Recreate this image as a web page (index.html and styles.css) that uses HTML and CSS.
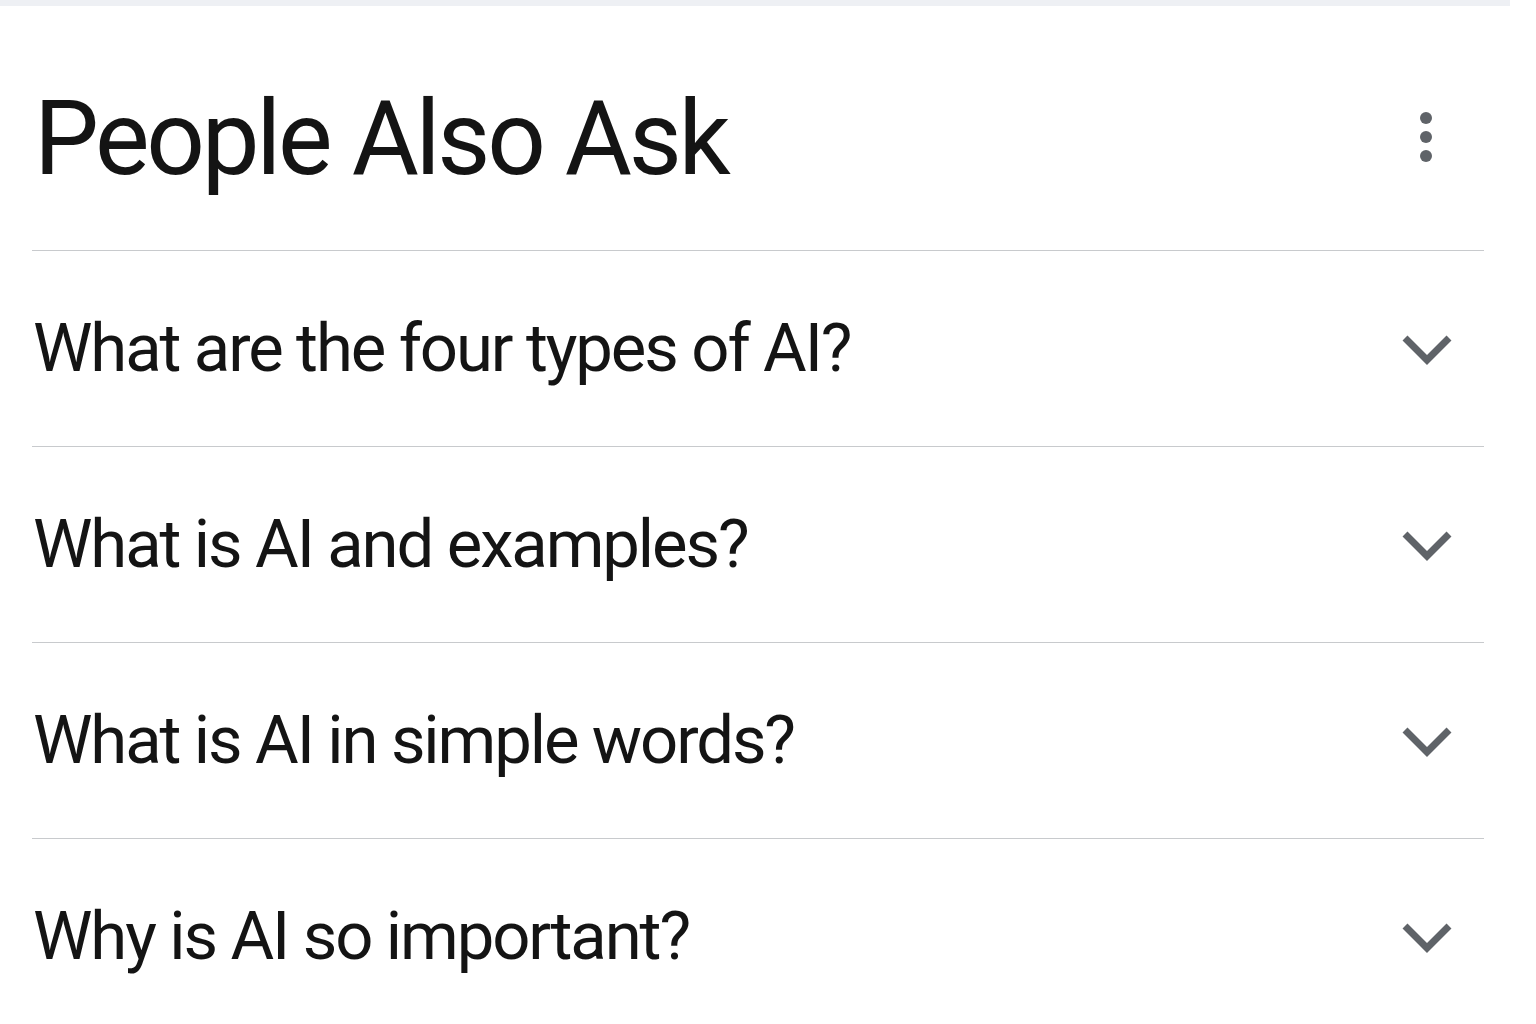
FILE: index.html
```html
<!DOCTYPE html>
<html lang="en">
<head>
<meta charset="utf-8">
<title>People Also Ask</title>
<link rel="stylesheet" href="styles.css">
</head>
<body>
<div class="topbar"></div>
<section class="paa">
  <header class="paa-header">
    <h1 class="paa-title">People Also Ask</h1>
    <button class="more" aria-label="More options">
      <svg width="14" height="52" viewBox="0 0 14 52"><circle cx="7" cy="7" r="6"/><circle cx="7" cy="26" r="6"/><circle cx="7" cy="45" r="6"/></svg>
    </button>
  </header>
  <div class="row"><span class="q">What are the four types of AI?</span><svg class="chev" viewBox="0 0 52 32"><path d="M4 5 L26 27 L48 5"/></svg></div>
  <div class="row"><span class="q">What is AI and examples?</span><svg class="chev" viewBox="0 0 52 32"><path d="M4 5 L26 27 L48 5"/></svg></div>
  <div class="row"><span class="q">What is AI in simple words?</span><svg class="chev" viewBox="0 0 52 32"><path d="M4 5 L26 27 L48 5"/></svg></div>
  <div class="row"><span class="q">Why is AI so important?</span><svg class="chev" viewBox="0 0 52 32"><path d="M4 5 L26 27 L48 5"/></svg></div>
</section>
</body>
</html>
```
FILE: styles.css
```css
html, body {
  margin: 0;
  padding: 0;
  background: #ffffff;
  overflow: hidden;
}
body {
  font-family: "Roboto", "Liberation Sans", sans-serif;
  color: #141414;
}
.topbar {
  width: 1510px;
  height: 6px;
  background: #eef0f4;
}
.paa {
  margin-left: 32px;
  width: 1452px;
}
.paa-header {
  height: 245px;
  padding-top: 81px;
  display: flex;
  align-items: flex-start;
  justify-content: space-between;
  border-bottom: 1.5px solid #c8cacd;
  box-sizing: border-box;
}
.paa-title {
  margin: 0 0 0 2px;
  font-size: 103px;
  font-weight: 400;
  line-height: 1;
  letter-spacing: -3.3px;
}
.more {
  border: 0;
  background: none;
  padding: 0;
  margin: 24px 51px 0 0;
  display: flex;
}
.more svg { fill: #5f6368; }
.row {
  height: 196px;
  display: flex;
  align-items: center;
  justify-content: space-between;
  border-bottom: 1.5px solid #c8cacd;
  box-sizing: border-box;
}
.q {
  font-size: 67px;
  line-height: 1;
  margin-left: 1px;
  letter-spacing: -2.1px;
}
.chev {
  width: 52px;
  height: 32px;
  margin-right: 31px;
  fill: none;
  stroke: #5f6368;
  stroke-width: 7;
  stroke-linecap: butt;
  stroke-linejoin: miter;
}
```
